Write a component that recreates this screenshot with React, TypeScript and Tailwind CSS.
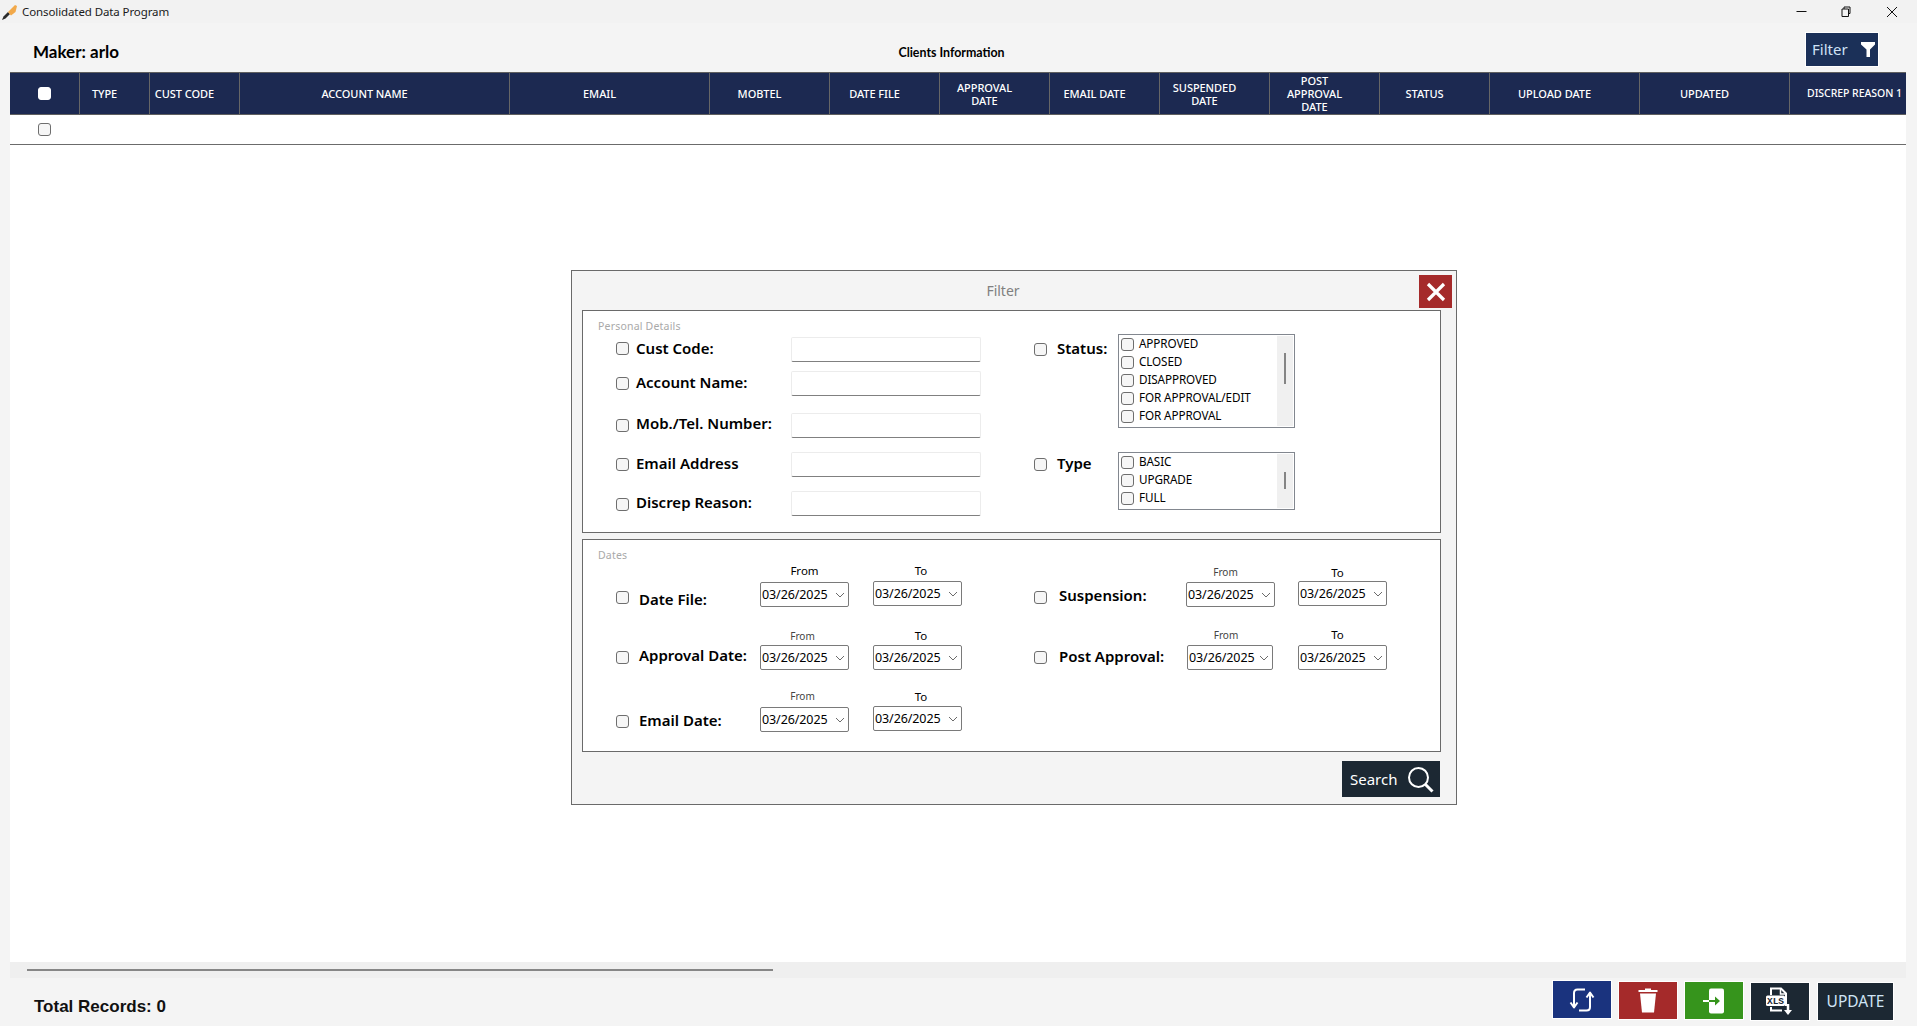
import React from "react";

const ui = "font-['Noto_Sans','Open_Sans',sans-serif]";

function Check({ className = "" }: { className?: string }) {
  return (
    <input
      type="checkbox"
      readOnly
      className={`block w-[13px] h-[13px] shrink-0 appearance-none rounded-[3px] border border-[#6e6e6e] bg-[#f6f6f6] ${className}`}
    />
  );
}

function Chevron() {
  return (
    <svg width="10" height="6" viewBox="0 0 10 6" className="shrink-0">
      <path d="M1 1l4 4 4-4" fill="none" stroke="#6b6b6b" strokeWidth="1" />
    </svg>
  );
}

function DateField({
  label,
  colClass,
  labelClass,
  pickerClass,
}: {
  label: string;
  colClass: string;
  labelClass: string;
  pickerClass: string;
}) {
  return (
    <div className={`flex flex-col ${colClass}`}>
      <div className={`h-[14px] -mt-[1px] mb-[1px] leading-[14px] text-center ${labelClass}`}>{label}</div>
      <div
        className={`h-[25px] flex items-center justify-between pl-[1px] pr-[3px] pt-[1px] bg-white border border-[#7a7a7a] rounded-[2px] text-[12.5px] text-black tracking-[-0.1px] ${pickerClass}`}
      >
        <span>03/26/2025</span>
        <Chevron />
      </div>
    </div>
  );
}

const big = "text-[11.5px] text-black";
const small = "text-[10px] text-[#444]";

function Field({ label, rowClass, checkClass, labelClass }: { label: string; rowClass: string; checkClass: string; labelClass: string }) {
  return (
    <div className={`flex items-start pl-[33px] ${rowClass}`}>
      <Check className={checkClass} />
      <div className={`ml-[7px] w-[155px] h-[20px] leading-[20px] text-[15px] font-semibold text-black whitespace-nowrap ${labelClass}`}>{label}</div>
      <div className="w-[190px] h-[25px] bg-white border border-[#ececec] border-b-[#808080] rounded-[2px]" />
    </div>
  );
}

function ListBox({ items, boxClass, thumbClass }: { items: string[]; boxClass: string; thumbClass: string }) {
  return (
    <div className={`w-[177px] border border-[#82878f] bg-white flex justify-between p-px ${boxClass}`}>
      <div className="flex flex-col pl-[1px] -mt-[1px]">
        {items.map((t) => (
          <div key={t} className="h-[18px] flex items-center gap-[5px] text-[11.7px] text-black whitespace-nowrap tracking-[-0.1px]">
            <Check />
            <span>{t}</span>
          </div>
        ))}
      </div>
      <div className="w-[16px] bg-[#f0f0f0] flex justify-center">
        <div className={`w-[2px] bg-[#858585] ${thumbClass}`} />
      </div>
    </div>
  );
}

const cols: { t: React.ReactNode; w: string }[] = [
  { t: "TYPE", w: "w-[70px]" },
  { t: "CUST CODE", w: "w-[90px]" },
  { t: "ACCOUNT NAME", w: "w-[270px]" },
  { t: "EMAIL", w: "w-[200px]" },
  { t: "MOBTEL", w: "w-[120px]" },
  { t: "DATE FILE", w: "w-[110px]" },
  { t: <>APPROVAL<br />DATE</>, w: "w-[110px]" },
  { t: "EMAIL DATE", w: "w-[110px]" },
  { t: <>SUSPENDED<br />DATE</>, w: "w-[110px]" },
  { t: <>POST<br />APPROVAL<br />DATE</>, w: "w-[110px]" },
  { t: "STATUS", w: "w-[110px]" },
  { t: "UPLOAD DATE", w: "w-[150px]" },
  { t: "UPDATED", w: "w-[150px]" },
];

function FooterBtn({ className, children }: { className: string; children: React.ReactNode }) {
  return (
    <div className={`h-[39px] w-[60px] flex items-center justify-center border border-white ${className}`}>{children}</div>
  );
}

export default function App() {
  return (
    <div className={`h-screen w-full overflow-hidden flex flex-col bg-[#f4f4f4] text-black ${ui}`}>
      {/* Title bar */}
      <div className="h-[23px] shrink-0 bg-[#f2f2f2] flex items-center justify-between">
        <div className="flex items-center">
          <svg width="18" height="18" viewBox="0 0 18 18" className="ml-[1px] mt-[1px]">
            <path d="M1 17l1.5-3.5L7 9l2 2-4.5 4.5z" fill="#2b2b2b" />
            <path d="M7 9l7-7 2 1-1.5 6-4.5 3.5z" fill="#f2a94a" />
          </svg>
          <span className="ml-[3px] text-[11.5px] leading-none text-[#1a1a1a] tracking-[-0.1px]">Consolidated Data Program</span>
        </div>
        <div className="flex items-center gap-[34px] pr-[19px]">
          <svg width="11" height="11" viewBox="0 0 11 11"><path d="M0.5 5.5h10" stroke="#111" strokeWidth="1" /></svg>
          <svg width="11" height="11" viewBox="0 0 11 11"><path d="M1 3h6.5v7.5H1zM3 3V1h6v6.5H7.5" fill="none" stroke="#111" strokeWidth="1" /></svg>
          <svg width="12" height="12" viewBox="0 0 12 12"><path d="M1 1l10 10M11 1L1 11" stroke="#111" strokeWidth="1" /></svg>
        </div>
      </div>

      {/* Header */}
      <div className="h-[49px] shrink-0 flex items-center pl-[33px] pr-[38px]">
        <div className="flex-1 basis-0 font-['Lato',sans-serif] font-bold text-[17px] pt-[9px]">Maker: arlo</div>
        <div className="font-['Lato',sans-serif] font-bold text-[12.4px] pr-[9px] pt-[11px]">Clients Information</div>
        <div className="flex-1 basis-0 flex justify-end pt-[3px]">
          <div className="w-[74px] h-[35px] border border-white bg-[#1b3058] flex items-center justify-between pl-[6px] pr-[3px]">
            <span className="text-[15px] text-[#cfe2f5]">Filter</span>
            <svg width="14" height="15" viewBox="0 0 14 15"><path d="M0 0h14v2.5L9 7.5V15H5.5V7.5L0 2.5z" fill="#fff" /></svg>
          </div>
        </div>
      </div>

      {/* Table area */}
      <div className="flex-1 min-h-0 ml-[10px] mr-[11px] bg-white flex flex-col">
        <div className="flex-1 min-h-0">
          <div className="h-[43px] flex bg-[#1c2951] border-y border-[#5f5f5f] text-white text-[11px] font-medium leading-[13px] tracking-[-0.05px] text-center">
            <div className="w-[70px] shrink-0 flex items-center justify-center border-r border-[#666]">
              <Check className="bg-white border-white" />
            </div>
            {cols.map((c, i) => (
              <div key={i} className={`${c.w} shrink-0 flex items-center justify-center border-r border-[#666] pr-[20px]`}>
                <span className="whitespace-nowrap">{c.t}</span>
              </div>
            ))}
            <div className="flex-1 min-w-0 flex items-center justify-center whitespace-nowrap overflow-hidden pl-[13px] text-[10.5px]">DISCREP REASON 1</div>
          </div>
          <div className="h-[30px] border-b border-[#6b6b6b] flex items-center pl-[28px]">
            <Check />
          </div>
        </div>
        <div className="h-[16px] shrink-0 bg-[#efefef] pl-[17px] pt-[7px]">
          <div className="w-[746px] h-[2px] bg-[#868686]" />
        </div>
      </div>

      {/* Footer */}
      <div className="h-[48px] shrink-0 flex items-start justify-between pl-[34px] pr-[23px]">
        <div className="font-['Liberation_Sans',sans-serif] font-bold text-[17px] mt-[16px] text-[#111]">Total Records: 0</div>
        <div className="flex items-start gap-[6px] mt-[3px]">
          <FooterBtn className="bg-[#1a337e] -mt-[1px]">
            <svg width="26" height="26" viewBox="0 0 26 26" fill="none" stroke="#fff" strokeWidth="2">
              <path d="M16 2.5H8.5Q5 2.5 5 6v14" />
              <path d="M1.5 15.5L5 20.5l3.5-5" strokeLinejoin="round" />
              <path d="M10 23.5h7.5Q21 23.5 21 20V6" />
              <path d="M17.5 10.5L21 5.5l3.5 5" strokeLinejoin="round" />
            </svg>
          </FooterBtn>
          <FooterBtn className="bg-[#a52a2a]">
            <svg width="20" height="25" viewBox="0 0 20 25" fill="#fff">
              <path d="M7 0.5h6V2h6.5v2H0.5V2H7z" />
              <path d="M2 5.5h16L16 24.5H4z" />
            </svg>
          </FooterBtn>
          <FooterBtn className="bg-[#36941c]">
            <svg width="22" height="26" viewBox="0 0 22 26">
              <rect x="6" y="0.5" width="15" height="25" rx="2" fill="#fff" />
              <path d="M0 13h6" stroke="#fff" strokeWidth="2" />
              <path d="M6 13h8" stroke="#36941c" strokeWidth="2" />
              <path d="M12 8.5l5 4.5-5 4.5z" fill="#36941c" />
            </svg>
          </FooterBtn>
          <FooterBtn className="bg-[#1c2833] mt-[1px]">
            <svg width="28" height="29" viewBox="0 0 28 29">
              <path d="M5 8V1.5h10l5 5V19" fill="none" stroke="#fff" strokeWidth="2" />
              <path d="M5 20v3.5h11" fill="none" stroke="#fff" strokeWidth="2" />
              <path d="M14.5 1.5v5.5h5.5" fill="none" stroke="#fff" strokeWidth="1.5" />
              <rect x="0" y="8.5" width="19" height="10.5" rx="1.5" fill="#fff" />
              <text x="9.5" y="17" textAnchor="middle" fontSize="9.5" fontWeight="700" fill="#1c2833" fontFamily="'Liberation Mono', monospace">XLS</text>
              <path d="M22 17v7" stroke="#fff" strokeWidth="2.5" />
              <path d="M18 23h8l-4 5z" fill="#fff" />
            </svg>
          </FooterBtn>
          <div className="ml-[1px] mt-[1px] h-[39px] w-[77px] flex items-center justify-center border border-white bg-[#1c2833] text-[15.5px] text-[#cfe4f5]">UPDATE</div>
        </div>
      </div>

      {/* Filter dialog */}
      <div className="absolute left-[571px] top-[270px] w-[886px] h-[535px] border border-[#6a6a6a] bg-[#f4f4f4] flex flex-col pl-[10px] pr-[15px]">
        <div className="h-[39px] shrink-0 flex -mr-[15px]">
          <div className="flex-1 flex items-center justify-center pl-[5px] text-[14px] text-[#808080]">Filter</div>
          <div className="mt-[4px] mr-[4px] w-[33px] h-[33px] bg-[#a52a2a] flex items-center justify-center">
            <svg width="20" height="20" viewBox="0 0 20 20"><path d="M2 2l16 16M18 2L2 18" stroke="#fff" strokeWidth="3.2" /></svg>
          </div>
        </div>

        {/* Personal details */}
        <div className="h-[223px] shrink-0 border border-[#6a6a6a] bg-white pt-[8px]">
          <div className="h-[14px] leading-[14px] pl-[15px] text-[10.5px] tracking-[0.2px] text-[#a9a9a9]">Personal Details</div>
          <div className="flex items-start">
            <div className="w-[451px] shrink-0 mt-[4px] flex flex-col">
              <Field label="Cust Code:" rowClass="h-[34px]" checkClass="mt-[5px]" labelClass="mt-[1px]" />
              <Field label="Account Name:" rowClass="h-[42px]" checkClass="mt-[6px]" labelClass="mt-[1px]" />
              <Field label="Mob./Tel. Number:" rowClass="h-[39px]" checkClass="mt-[6px]" labelClass="mt-0" />
              <Field label="Email Address" rowClass="h-[39px]" checkClass="mt-[6px]" labelClass="mt-[1px]" />
              <Field label="Discrep Reason:" rowClass="h-[25px]" checkClass="mt-[7px]" labelClass="mt-[1px]" />
            </div>
            <div className="mt-[1px] flex flex-col">
              <div className="flex items-start">
                <Check className="mt-[9px]" />
                <div className="ml-[10px] w-[61px] mt-[4px] h-[20px] leading-[20px] text-[15px] font-semibold">Status:</div>
                <ListBox
                  items={["APPROVED", "CLOSED", "DISAPPROVED", "FOR APPROVAL/EDIT", "FOR APPROVAL"]}
                  boxClass="h-[94px]"
                  thumbClass="mt-[17px] h-[31px]"
                />
              </div>
              <div className="flex items-start mt-[24px]">
                <Check className="mt-[6px]" />
                <div className="ml-[10px] w-[61px] mt-[1px] h-[20px] leading-[20px] text-[15px] font-semibold">Type</div>
                <ListBox items={["BASIC", "UPGRADE", "FULL"]} boxClass="h-[58px]" thumbClass="mt-[18px] h-[17px]" />
              </div>
            </div>
          </div>
        </div>

        {/* Dates */}
        <div className="h-[213px] shrink-0 mt-[6px] border border-[#6a6a6a] bg-white pt-[8px]">
          <div className="h-[14px] leading-[14px] pl-[15px] text-[10.5px] tracking-[0.2px] text-[#a9a9a9]">Dates</div>
          <div className="flex items-start mt-[3px]">
            <div className="w-[451px] shrink-0 flex flex-col">
              <div className="h-[62px] flex items-start pl-[33px]">
                <Check className="mt-[26px]" />
                <div className="ml-[10px] w-[121px] mt-[24px] h-[20px] leading-[20px] text-[15px] font-semibold whitespace-nowrap">Date File:</div>
                <DateField label="From" colClass="w-[89px]" labelClass={big} pickerClass="mt-[3px]" />
                <DateField label="To" colClass="w-[89px] ml-[24px]" labelClass={`${big} pl-[7px]`} pickerClass="mt-[2px]" />
              </div>
              <div className="h-[62px] flex items-start pl-[33px]">
                <Check className="mt-[24px]" />
                <div className="ml-[10px] w-[121px] mt-[18px] h-[20px] leading-[20px] text-[15px] font-semibold whitespace-nowrap">Approval Date:</div>
                <DateField label="From" colClass="w-[89px] mt-[3px]" labelClass={`${small} pr-[4px]`} pickerClass="mt-[1px]" />
                <DateField label="To" colClass="w-[89px] ml-[24px] mt-[3px]" labelClass={`${big} pl-[7px]`} pickerClass="mt-[1px]" />
              </div>
              <div className="h-[62px] flex items-start pl-[33px]">
                <Check className="mt-[26px]" />
                <div className="ml-[10px] w-[121px] mt-[21px] h-[20px] leading-[20px] text-[15px] font-semibold whitespace-nowrap">Email Date:</div>
                <DateField label="From" colClass="w-[89px] mt-[1px]" labelClass={`${small} pr-[4px]`} pickerClass="mt-[3px]" />
                <DateField label="To" colClass="w-[89px] ml-[24px] mt-[2px]" labelClass={`${big} pl-[7px]`} pickerClass="mt-[1px]" />
              </div>
            </div>
            <div className="flex flex-col">
              <div className="h-[62px] flex items-start">
                <Check className="mt-[26px]" />
                <div className="ml-[12px] w-[127px] mt-[20px] h-[20px] leading-[20px] text-[15px] font-semibold whitespace-nowrap">Suspension:</div>
                <DateField label="From" colClass="w-[89px] mt-[1px]" labelClass={`${small} pr-[10px]`} pickerClass="mt-[2px]" />
                <DateField label="To" colClass="w-[89px] ml-[23px] mt-[2px]" labelClass={`${big} pr-[10px]`} pickerClass="" />
              </div>
              <div className="h-[62px] flex items-start">
                <Check className="mt-[24px]" />
                <div className="ml-[12px] w-[128px] mt-[19px] h-[20px] leading-[20px] text-[15px] font-semibold whitespace-nowrap">Post Approval:</div>
                <DateField label="From" colClass="w-[86px] mt-[2px]" labelClass={`${small} pr-[8px]`} pickerClass="mt-[2px]" />
                <DateField label="To" colClass="w-[89px] ml-[25px] mt-[2px]" labelClass={`${big} pr-[10px]`} pickerClass="mt-[2px]" />
              </div>
            </div>
          </div>
        </div>

        {/* Search */}
        <div className="flex justify-end mt-[9px] mr-[1px]">
          <div className="w-[98px] h-[36px] bg-[#1c2833] flex items-center justify-between pl-[8px] pr-[6px]">
            <span className="text-[15px] text-white">Search</span>
            <svg width="27" height="27" viewBox="0 0 27 27" fill="none" stroke="#fff">
              <circle cx="11.5" cy="11.5" r="9.5" strokeWidth="2" />
              <path d="M18.5 18.5l7 7" strokeWidth="3" />
            </svg>
          </div>
        </div>
      </div>
    </div>
  );
}
